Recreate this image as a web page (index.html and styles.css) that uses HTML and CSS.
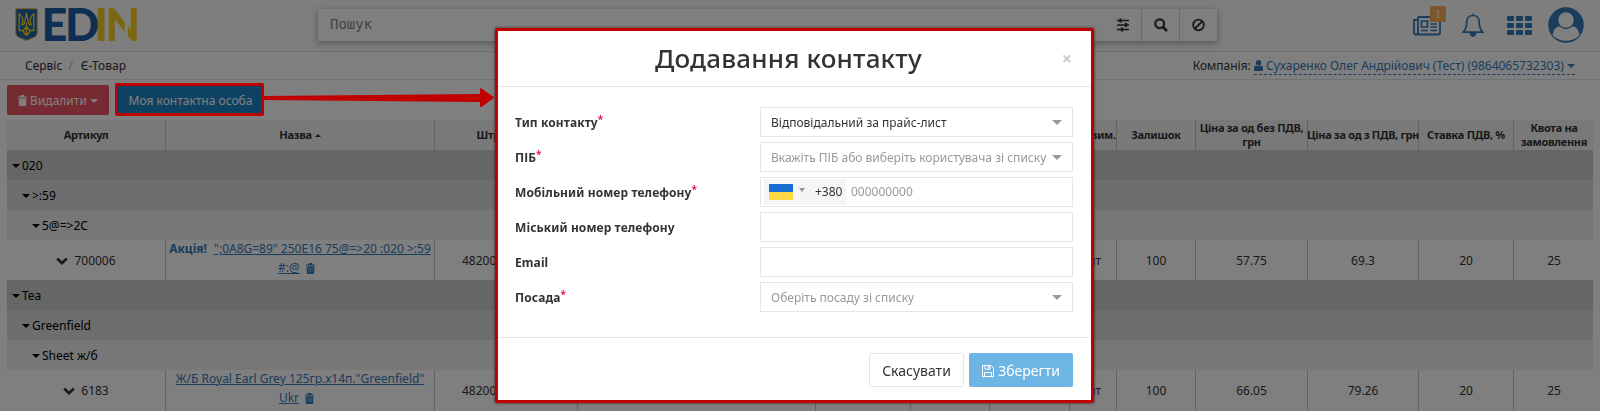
FILE: index.html
```html
<!DOCTYPE html>
<html lang="uk">
<head>
<meta charset="utf-8">
<title>Є-Товар</title>
<link rel="stylesheet" href="styles.css">
</head>
<body>
<svg class="defs" width="0" height="0">
  <symbol id="trash" viewBox="0 0 10 12"><path d="M3.2 0h3.6l.7 1.6H10v1.2H0V1.600h2.500zM.8 3.500h8.400V10.800Q9.200 12 8 12H2Q.8 12 .8 10.800z" fill="currentColor"/><path d="M3.100 5v5M5 5v5M6.900 5v5" class="cut"/></symbol>
  <symbol id="chev" viewBox="0 0 12 8"><path d="M1.200 1.500 6 6.200l4.800-4.700" fill="none" stroke="currentColor" stroke-width="2.600"/></symbol>
</svg>
<header class="nav">
  <svg class="logo" width="124" height="36" viewBox="0 0 124 36">
    <path d="M.8 1.800Q.8.800 2 .8h19q1.200 0 1.200 1V25q0 3-3 4.200L11.500 32.500 3.800 29.200Q.8 28 .8 25z" fill="#1c62ad" stroke="#d9b92c"/>
    <path d="M4.200 6v16.500h4q.8 3.500 3.300 5 2.500-1.500 3.300-5h4V6q-4 3-3.700 7.500l1 3.500q-2.700 0-3-3.500L11.500 4.500l-1.600 9q-.3 3.500-3 3.500l1-3.500Q8.200 9 4.200 6zM8.200 22.500l3.300-4 3.300 4M11.500 15v12" fill="none" stroke="#ffdd22" stroke-width="1.300"/>
    <text class="logo-text" y="33" fill="#1c5ea8"><tspan x="26.500">E</tspan><tspan x="50">D</tspan></text>
    <text class="logo-text" y="33" fill="#f6cf1e"><tspan x="79.500">I</tspan><tspan x="90.500">N</tspan></text>
    <path d="M109.800 0h3v34h-3z" fill="#fcfcfc"/>
  </svg>
  <div class="search">
    <span class="ph">Пошук</span>
    <span class="sb first"><svg width="14" height="14" viewBox="0 0 14 14"><path d="M1 2.500h12M1 7h12M1 11.500h12" stroke="#333" stroke-width="1.300"/><path d="M4.500 .5v4M10 5v4M6 9.500v4" stroke="#333" stroke-width="2.300"/></svg></span>
    <span class="sb line"><svg width="14" height="14" viewBox="0 0 14 14"><circle cx="5.700" cy="5.700" r="4.400" fill="none" stroke="#333" stroke-width="2.200"/><path d="m9 9 4 4" stroke="#333" stroke-width="2.600"/></svg></span>
    <span class="sb line"><svg width="14" height="14" viewBox="0 0 14 14"><circle cx="6.500" cy="7" r="5.300" fill="none" stroke="#333" stroke-width="1.800"/><path d="m3 10.500 7-7" stroke="#333" stroke-width="1.800"/></svg></span>
  </div>
  <div class="icons">
    <span class="news"><svg width="28" height="20" viewBox="0 0 28 20"><path d="M5 1h22v15.500q0 2-2 2H3q-2 0-2-2V4h4M5 1v15q0 2.500-2 2.500" fill="none" stroke="currentColor" stroke-width="1.800"/><path d="M8.500 5h6v6h-6zM17.500 5H24M17.500 8H24M17.500 11H24M8 14.500h7M17.500 14.500H24" fill="none" stroke="currentColor" stroke-width="1.700"/></svg><b class="badge">1</b></span>
    <svg class="bell" width="22" height="24" viewBox="0 0 22 24"><path d="M11 2.500C7 2.500 4.800 5.500 4.800 9c0 5-1.500 8-3.600 10.200h19.600C18.700 17 17.200 14 17.200 9c0-3.500-2.200-6.500-6.200-6.500z" fill="none" stroke="currentColor" stroke-width="1.700"/><path d="M11 .3v2M8 20h6q-.5 3.500-3 3.500T8 20z" fill="currentColor" stroke="currentColor"/></svg>
    <span class="apps"><i></i><i></i><i></i><i></i><i></i><i></i><i></i><i></i><i></i></span>
    <svg class="ava" width="36" height="36" viewBox="0 0 36 36"><circle cx="18" cy="18" r="17.800" fill="currentColor"/><path d="M4.500 28q1.500-8.500 7.500-8.700 6 5.400 12 0 6 .2 7.500 8.700-5 5.800-13.500 5.800T4.500 28z" class="w"/><circle cx="18" cy="13" r="9" fill="currentColor"/><circle cx="18" cy="13" r="7.700" class="w"/></svg>
  </div>
</header>
<div class="crumbs">
  <div>Сервіс<span class="sep">/</span>Є-Товар</div>
  <div>Компанія: <span class="company"><svg width="9" height="11" viewBox="0 0 9 11"><circle cx="4.500" cy="2.700" r="2.700" fill="currentColor"/><path d="M0 11V8.500q0-3 2-3 2.500 1.500 5 0 2 0 2 3V11z" fill="currentColor"/></svg> Сухаренко Олег Андрійович (Тест) (9864065732303) <i class="tri"></i></span></div>
</div>
<div class="actions">
  <span class="btn del"><svg width="9" height="11"><use href="#trash"/></svg> Видалити <i class="tri"></i></span>
  <span class="btn me">Моя контактна особа</span>
</div>
<main class="table">
  <div class="row head"><div>Артикул</div><div>Назва <i class="tri up"></i></div><div>Штрих-код</div><div></div><div></div><div></div><div></div><div class="unit">Од. вим.</div><div>Залишок</div><div>Ціна за од без ПДВ, грн</div><div class="unit">Ціна за од з ПДВ, грн</div><div>Ставка ПДВ, %</div><div>Квота на замовлення</div></div>
  <div class="g g1"><i class="tri"></i>020</div>
  <div class="g g2"><i class="tri"></i>&gt;:59</div>
  <div class="g g3"><i class="tri"></i>5@=&gt;2C</div>
  <div class="row"><div><svg class="chev" width="12" height="8"><use href="#chev"/></svg>700006</div><div class="name"><p><b>Акція!</b><u class="sp">";0A8G=89" 250E16 75@=&gt;20 :020 &gt;:59</u></p><p><u>#:@</u><svg class="bin" width="9" height="11"><use href="#trash"/></svg></p></div><div class="code13">48200</div><div></div><div></div><div></div><div></div><div>шт</div><div>100</div><div>57.75</div><div>69.3</div><div>20</div><div>25</div></div>
  <div class="g g1"><i class="tri"></i>Tea</div>
  <div class="g g2"><i class="tri"></i>Greenfield</div>
  <div class="g g3"><i class="tri"></i>Sheet ж/б</div>
  <div class="row"><div><svg class="chev" width="12" height="8"><use href="#chev"/></svg>6183</div><div class="name"><p><u>Ж/Б Royal Earl Grey 125гр.х14п."Greenfield"</u></p><p><u>Ukr</u><svg class="bin" width="9" height="11"><use href="#trash"/></svg></p></div><div class="code13">48200</div><div></div><div></div><div></div><div></div><div>шт</div><div>100</div><div>66.05</div><div>79.26</div><div>20</div><div>25</div></div>
  <div class="row tail"><div></div><div></div><div></div><div></div><div></div><div></div><div></div><div></div><div></div><div></div><div></div><div></div><div></div></div>
</main>
<div class="shade"></div>
<div class="mark"></div>
<svg class="arrow" width="231" height="20" viewBox="0 0 231 20"><path d="M0 8 216 6V1Q216 0 217.500.5L230.500 9.500 217.500 19Q216 19.500 216 18V14L0 12z" fill="#c00000"/></svg>
<section class="modal">
  <div class="mh"><h1>Додавання контакту</h1><span class="x">×</span></div>
  <div class="mb">
    <div class="f"><label>Тип контакту<sup>*</sup></label><div class="in dark">Відповідальний за прайс-лист<i class="car"></i></div></div>
    <div class="f"><label>ПІБ<sup>*</sup></label><div class="in">Вкажіть ПІБ або виберіть користувача зі списку<i class="car"></i></div></div>
    <div class="f"><label>Мобільний номер телефону<sup>*</sup></label><div class="in tel"><span class="code"><i class="flag"></i><i class="car sm"></i><span>+380</span></span>000000000</div></div>
    <div class="f"><label>Міський номер телефону</label><div class="in"></div></div>
    <div class="f"><label>Email</label><div class="in"></div></div>
    <div class="f"><label>Посада<sup>*</sup></label><div class="in">Оберіть посаду зі списку<i class="car"></i></div></div>
  </div>
  <div class="mf"><span class="mbtn cancel">Скасувати</span><span class="mbtn save"><svg width="12" height="12" viewBox="0 0 12 12"><path d="M.5.5H9L11.500 3v8.500H.5zM3 .5v3.700h5V.5M2.500 11.500v-4h7v4M6.500 1v2.500" fill="none" stroke="#fff"/></svg>Зберегти</span></div>
</section>
</body>
</html>
```
FILE: styles.css
```css
* { box-sizing: border-box; }
body { margin: 0; width: 1600px; height: 411px; overflow: hidden; background: #fff; color: #333; font: 12px/20px "Noto Sans", sans-serif; }
p { margin: 0; }
svg { flex: none; }
.defs { position: absolute; }
.cut { stroke: #fff; stroke-width: .8; opacity: .6; }
.nav { height: 52px; border-bottom: 1px solid #e2e2e2; background: #fcfcfc; display: flex; align-items: flex-start; padding-left: 15px; }
.logo { margin-top: 8px; overflow: visible; }
.logo-text { font: 900 45px Lato, sans-serif; }
.search { margin: 9px 0 0 179px; width: 899px; height: 32px; background: #fff; display: flex; box-shadow: 0 2px 6px 1px #b9b9c2; }
.ph { flex: 1; padding-left: 12px; font: 14px/31px "DejaVu Sans Mono", monospace; color: #888; }
.sb { width: 38px; display: flex; align-items: center; justify-content: center; }
.first { padding-left: 1px; }
.line { border-left: 1px solid #d2d2d2; }
.icons { color: #337ab7; display: flex; flex: 1; }
.news { position: relative; margin: 16px 0 0 196px; width: 28px; height: 20px; }
.news svg { display: block; }
.badge { position: absolute; left: 17px; top: -10px; width: 16px; height: 16px; background: #f8ac59; color: #fff; border-radius: 2px; font: 11px/16px "Noto Sans", sans-serif; text-align: center; }
.bell { margin: 13px 0 0 21px; }
.apps { display: grid; grid-template-columns: repeat(3, 7px); grid-auto-rows: 5px; gap: 2px; margin: 16px 0 0 23px; height: 19px; }
.apps i { background: #337ab7; border-radius: 1px; }
.ava { margin: 7px 0 0 16px; }
.w { fill: #fff; }
.crumbs { height: 28px; border-bottom: 1px solid #e2e2e2; display: flex; justify-content: space-between; padding: 4px 25px 0; }
.sep { color: #bbb; margin: 0 8px 0 6px; }
.company { color: #337ab7; border-bottom: 1px dashed #337ab7; display: inline-block; height: 19px; }
.tri { display: inline-block; border: 4px solid transparent; border-top-color: currentColor; border-bottom-width: 0; vertical-align: 2px; }
.up { border-width: 0 3px 3px; border-bottom-color: currentColor; }
.actions { display: flex; gap: 8px; padding: 5px 7px; height: 40px; }
.btn { height: 30px; line-height: 32px; color: #fff; border-radius: 2px; text-align: center; }
.del { width: 102px; background: #ed5565; }
.del svg, .company svg { vertical-align: -1px; }
.me { width: 147px; background: #1c84c6; }
.table { margin-left: 7px; width: 1586px; }
.row { display: grid; grid-template-columns: 159px 269px 143px 238px 95px 79px 80px 47px 79px 112px 111px 95px 80px; height: 40px; }
.row > div { border-right: 1px solid #c4c4c4; display: flex; align-items: center; justify-content: center; text-align: center; padding-top: 2px; }
.row > div:last-child { border-right: 0; }
.row > .name { display: block; color: #337ab7; white-space: nowrap; line-height: 19px; padding-top: 0; }
.name p:first-child { margin-top: -1px; }
.row > .code13 { justify-content: flex-start; padding-left: 27px; }
.head { height: 30px; background: #f2f2f2; font-weight: 700; font-size: 11px; line-height: 14px; letter-spacing: -.3px; }
.head > div { padding-top: 0 !important; }
.head > .unit { white-space: nowrap; }
.head .tri { margin-left: 3px; }
.g { height: 30px; line-height: 31px; color: #000; }
.g .tri { margin-right: 2px; }
.g1 { background: #ccc; padding-left: 5px; }
.g2 { background: #dcdcdc; padding-left: 15px; }
.g3 { background: #efefef; padding-left: 25px; }
.chev { margin-right: 6px; }
.sp { margin-left: 7px; }
.bin { margin: 0 7px 0 6px; vertical-align: -2px; }
.row.tail { height: 12px; }
.shade { position: fixed; inset: 0; background: rgba(0,0,0,.5); }
.mark { position: absolute; left: 115px; top: 83px; width: 149px; height: 33px; border: 3px solid #c00000; border-radius: 2px; }
.arrow { position: absolute; left: 264px; top: 88px; }
.modal { position: absolute; left: 495px; top: 28px; width: 599px; height: 375px; background: #fff; border: 3px solid #c00000; border-radius: 2px; box-shadow: 0 0 3px rgba(60,0,0,.8); }
.mh { height: 56px; border-bottom: 1px solid #e5e5e5; display: flex; padding: 0 19px 0 17px; }
h1 { margin: 0; flex: 1; font-size: 26px; font-weight: 550; letter-spacing: .2px; line-height: 55px; text-align: center; }
.x { font-size: 18px; font-weight: 700; line-height: 54px; color: #ccc; }
.mb { height: 250px; padding: 20px 18px 0 17px; display: grid; grid-auto-rows: 30px; gap: 5px; }
.f { display: grid; grid-template: 30px / 245px 313px; }
.f label { font-weight: 700; line-height: 30px; padding-top: 1px; letter-spacing: .1px; }
sup { color: #e8174b; font-size: 10px; line-height: 0; vertical-align: 4px; font-weight: 700; }
.in { border: 1px solid #e5e6e7; padding: 1px 10px 0; display: flex; align-items: center; justify-content: space-between; color: #999; white-space: nowrap; }
.dark { color: #333; }
.car { border: 5px solid transparent; border-top-color: #999; border-bottom: 0; }
.sm { border-width: 4px 3.500px 0; margin: -4px 0 0 6px; }
.tel { justify-content: flex-start; padding: 0; }
.code { height: 26px; width: 82px; background: #f5f5f5; border-radius: 2px; margin: 0 5px 0 3px; display: flex; align-items: center; padding-left: 5px; color: #333; }
.code span { margin-left: 10px; }
.flag { width: 24px; height: 16px; background: linear-gradient(#156dd1 50%, #ffda44 50%); }
.mf { border-top: 1px solid #e5e5e5; display: flex; justify-content: flex-end; gap: 5px; padding: 15px 18px 0 0; font-size: 14px; }
.mbtn { height: 34px; border-radius: 2px; display: flex; align-items: center; justify-content: center; padding-top: 2px; }
.cancel { width: 95px; border: 1px solid #e5e6e7; }
.save { width: 104px; gap: 4px; background: #6cb5e4; color: #fff; }
```
